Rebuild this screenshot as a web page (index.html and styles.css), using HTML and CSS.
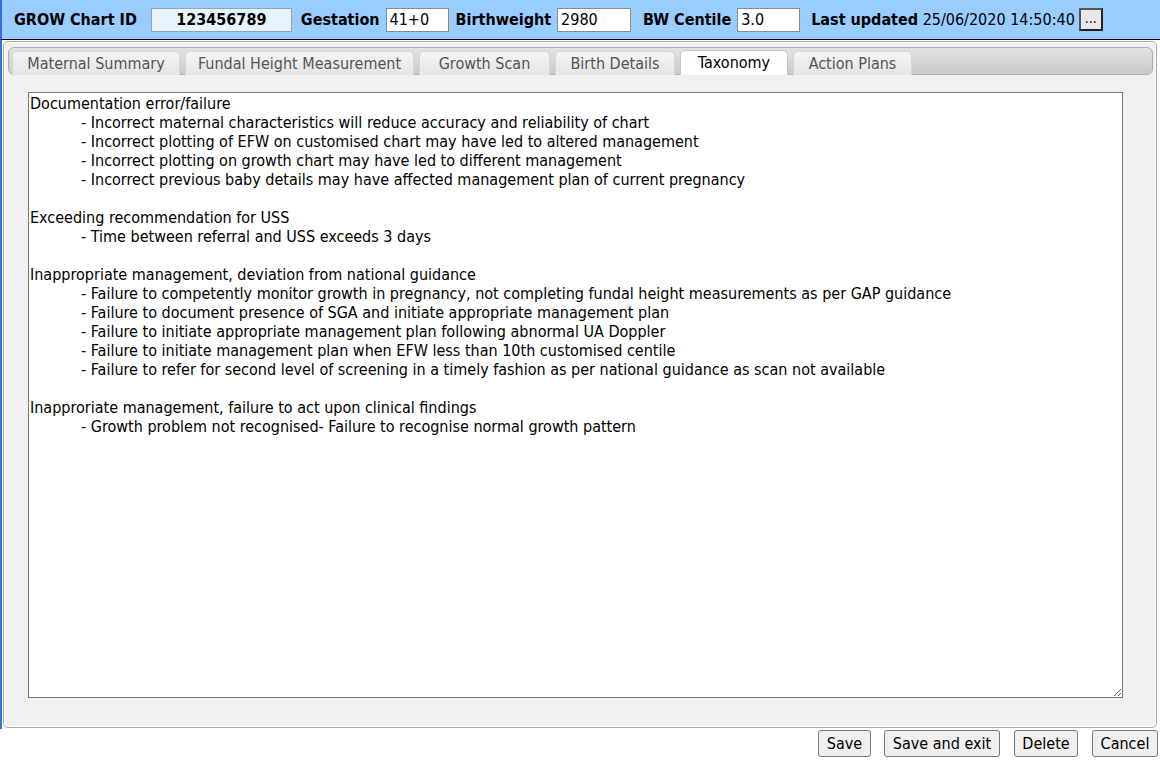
FILE: index.html
```html
<!DOCTYPE html>
<html lang="en">
<head>
  <meta charset="UTF-8" />
  <title>GROW Chart - Taxonomy</title>
  <link rel="stylesheet" href="styles.css">
</head>
<body>

  <header class="topbar">
    <label class="lbl lbl-id">GROW Chart ID</label>
    <span class="chart-id">123456789</span>
    <label class="lbl">Gestation</label>
    <input class="field f-gest" type="text" value="41+0">
    <label class="lbl">Birthweight</label>
    <input class="field f-bw" type="text" value="2980">
    <label class="lbl">BW Centile</label>
    <input class="field f-cent" type="text" value="3.0">
    <span class="updated"><b>Last updated</b> 25/06/2020 14:50:40</span>
    <button class="more">...</button>
  </header>

  <div class="frame">
    <div class="panel">
      <nav class="tabs">
        <a class="tab">Maternal Summary</a>
        <a class="tab">Fundal Height Measurement</a>
        <a class="tab">Growth Scan</a>
        <a class="tab">Birth Details</a>
        <a class="tab active">Taxonomy</a>
        <a class="tab">Action Plans</a>
      </nav>
      <div class="tab-body">
<textarea class="notes" spellcheck="false">Documentation error/failure
	- Incorrect maternal characteristics will reduce accuracy and reliability of chart
	- Incorrect plotting of EFW on customised chart may have led to altered management
	- Incorrect plotting on growth chart may have led to different management
	- Incorrect previous baby details may have affected management plan of current pregnancy

Exceeding recommendation for USS
	- Time between referral and USS exceeds 3 days

Inappropriate management, deviation from national guidance
	- Failure to competently monitor growth in pregnancy, not completing fundal height measurements as per GAP guidance
	- Failure to document presence of SGA and initiate appropriate management plan
	- Failure to initiate appropriate management plan following abnormal UA Doppler
	- Failure to initiate management plan when EFW less than 10th customised centile
	- Failure to refer for second level of screening in a timely fashion as per national guidance as scan not available

Inapproriate management, failure to act upon clinical findings
	- Growth problem not recognised- Failure to recognise normal growth pattern</textarea>
      </div>
    </div>
  </div>

  <footer class="actions">
    <button class="btn b-save">Save</button>
    <button class="btn b-exit">Save and exit</button>
    <button class="btn b-del">Delete</button>
    <button class="btn b-cancel">Cancel</button>
  </footer>

</body>
</html>
```

FILE: styles.css
```css
*{margin:0;padding:0;box-sizing:border-box;}
body{font-family:'DejaVu Sans Condensed','DejaVu Sans',sans-serif;font-size:16px;color:#000;background:#fff;width:1160px;height:761px;overflow:hidden;}

.topbar{display:flex;align-items:center;height:40px;background:#99ccff;border-bottom:1px solid #000;padding:0 0 0 12px;border-left:2px solid #3a6fd8;}
.lbl{font-weight:bold;margin-right:6px;}
.lbl-id{margin-right:14px;}
.chart-id{width:141px;height:24px;line-height:22px;text-align:center;font-weight:bold;background:#e6f2fc;border:1px solid #8fa3b6;margin:0 9px 0 0;}
.field{height:24px;border:1px solid #8a8a8a;font:inherit;padding:0 3px;background:#fff;margin-right:7px;}
.f-gest{width:63px;}
.f-bw{width:74px;margin-right:12px;}
.f-cent{width:63px;margin-right:11px;}
.updated{margin-right:4px;}
.updated b{font-weight:bold;}
.more{width:24px;height:23px;font:inherit;font-size:14px;line-height:14px;background:#e8e8e8;border:2px solid;border-color:#555 #222 #222 #555;padding-bottom:4px;}

.frame{border-left:2px solid #3a6fd8;height:689px;padding:1px 3px 0 1px;}
.panel{height:687px;border:1px solid #a8a8a8;border-radius:5px;background:#f0f0f0;box-shadow:inset 0 0 0 1px #fff;padding:5px 3px 0 4px;}

.tabs{display:flex;gap:5px;height:28px;padding:3px 0 0 3px;border:1px solid #b0b0b0;border-radius:6px;background:linear-gradient(#e2e2e2,#cacaca);}
.tab{display:block;height:24px;line-height:23px;text-align:center;white-space:nowrap;border:1px solid #d6d6d6;border-bottom:none;border-radius:5px 5px 0 0;background:linear-gradient(#f4f4f4,#e4e4e4);color:#555;cursor:pointer;}
.tab:nth-child(1){width:168px;}
.tab:nth-child(2){width:229px;}
.tab:nth-child(3){width:131px;}
.tab:nth-child(4){width:120px;}
.tab:nth-child(5){width:108px;}
.tab:nth-child(6){width:119px;}
.tab.active{background:#fff;color:#000;margin-top:-1px;height:25px;border-color:#c8c8c8;}

.tab-body{padding:17px 0 0 20px;}
.notes{display:block;width:1095px;height:606px;border:1px solid #777;background:#fff;font:inherit;line-height:19px;padding:1px 1px;color:#000;tab-size:51px;-moz-tab-size:51px;resize:both;overflow:hidden;}

.actions{display:flex;justify-content:flex-end;padding:1px 2px 0 0;}
.btn{height:27px;font:inherit;padding:0;background:#efefef;border:1px solid #777;border-radius:3px;color:#000;margin-left:14px;}
.b-save{width:53px;}
.b-exit{width:116px;margin-left:13px;}
.b-del{width:64px;}
.b-cancel{width:66px;}
```
